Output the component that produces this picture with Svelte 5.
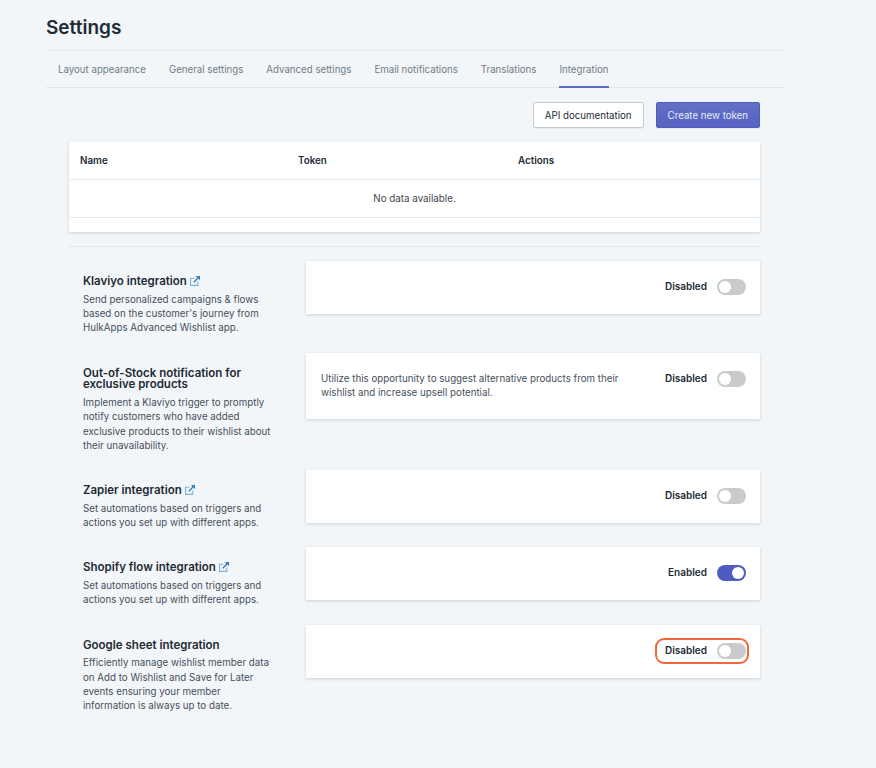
<script>
  const sections = [
    {
      title: "Klaviyo integration",
      link: true,
      desc: "Send personalized campaigns & flows based on the customer's journey from HulkApps Advanced Wishlist app.",
      status: "Disabled",
      on: false,
    },
    {
      title: "Out-of-Stock notification for exclusive products",
      desc: "Implement a Klaviyo trigger to promptly notify customers who have added exclusive products to their wishlist about their unavailability.",
      note: "Utilize this opportunity to suggest alternative products from their wishlist and increase upsell potential.",
      status: "Disabled",
      on: false,
    },
    {
      title: "Zapier integration",
      link: true,
      desc: "Set automations based on triggers and actions you set up with different apps.",
      status: "Disabled",
      on: false,
    },
    {
      title: "Shopify flow integration",
      link: true,
      desc: "Set automations based on triggers and actions you set up with different apps.",
      status: "Enabled",
      on: true,
    },
    {
      title: "Google sheet integration",
      desc: "Efficiently manage wishlist member data on Add to Wishlist and Save for Later events ensuring your member information is always up to date.",
      status: "Disabled",
      on: false,
      marked: true,
    },
  ];

  const tabs = [
    "Layout appearance",
    "General settings",
    "Advanced settings",
    "Email notifications",
    "Translations",
    "Integration",
  ];
</script>

<main class="page">
  <h1>Settings</h1>

  <nav class="tabs">
    {#each tabs as tab}
      <span class="tab" class:active={tab === "Integration"}>{tab}</span>
    {/each}
  </nav>

  <div class="content">
    <div class="actions">
      <button class="btn">API documentation</button>
      <button class="btn primary">Create new token</button>
    </div>

    <div class="table">
      <div class="thead">
        <span class="col-name">Name</span>
        <span class="col-token">Token</span>
        <span>Actions</span>
      </div>
      <div class="empty">No data available.</div>
      <div class="tfoot"></div>
    </div>

    <hr />

    {#each sections as s}
      <section class="row">
        <div class="info">
          <h2>
            {s.title}
            {#if s.link}
              <svg class="ext" viewBox="0 0 10 10" width="10" height="10" aria-hidden="true">
                <path d="M7.8 5.6V9.4H.6V2.2h3.9" fill="none" stroke="#7fb0de" stroke-width="1.1" />
                <path d="M3.8 6.2 8.2 1.8" fill="none" stroke="#2f7fc4" stroke-width="1.4" />
                <path d="M5.8 0h4.2v4.2z" fill="#2f7fc4" />
              </svg>
            {/if}
          </h2>
          <p>{s.desc}</p>
        </div>
        <div class="card">
          <div class="note" class:filled={s.note}>{s.note ?? ""}</div>
          <div class="status" class:marked={s.marked}>
            <span class="label">{s.status}</span>
            <span class="switch" class:on={s.on}><span class="knob"></span></span>
          </div>
        </div>
      </section>
    {/each}
  </div>
</main>

<style>
  :global(body) {
    margin: 0;
    background: #f3f6f8;
    font-family: Inter, "Liberation Sans", sans-serif;
    color: #212b36;
  }

  .page {
    box-sizing: border-box;
    width: 876px;
    height: 768px;
    padding: 14px 92px 0 46px;
    overflow: hidden;
  }

  h1 {
    margin: 0;
    height: 36px;
    font-size: 19px;
    line-height: 27px;
    font-weight: 600;
    color: #212b36;
  }

  .tabs {
    display: flex;
    gap: 23px;
    height: 36px;
    padding-left: 12px;
    border-top: 1px solid #e6e9ec;
    border-bottom: 1px solid #e3e6e9;
  }

  .tab {
    position: relative;
    font-size: 9.7px;
    line-height: 38px;
    color: #6f7c88;
  }

  .tab.active::after {
    content: "";
    position: absolute;
    left: 0;
    right: 0;
    bottom: -1px;
    height: 2px;
    background: #5c6ac4;
  }

  .content {
    padding: 14px 24px 0 23px;
  }

  .actions {
    display: flex;
    justify-content: flex-end;
    gap: 12px;
    height: 26px;
    margin-bottom: 14px;
  }

  .btn {
    height: 26px;
    padding: 0 11px;
    border: 1px solid #c4cdd5;
    border-radius: 2px;
    background: #fff;
    font: 400 9.7px Inter, "Liberation Sans", sans-serif;
    color: #212b36;
    box-shadow: 0 1px 0 rgba(22, 29, 37, 0.05);
  }

  .btn.primary {
    border-color: #4f5db8;
    background: linear-gradient(#6371c7, #5563c1);
    color: #e8eaf8;
  }

  .table {
    background: #fff;
    font-size: 9.8px;
    box-shadow: 0 1px 3px rgba(63, 63, 68, 0.2);
  }

  .thead {
    display: flex;
    height: 37px;
    padding-left: 11px;
    align-items: center;
    font-weight: 600;
    color: #212b36;
    border-bottom: 1px solid #e6e9ec;
  }

  .col-name {
    width: 218px;
  }

  .col-token {
    width: 220px;
  }

  .empty {
    height: 37px;
    line-height: 37px;
    text-align: center;
    color: #3d4852;
    border-bottom: 1px solid #e6e9ec;
  }

  .tfoot {
    height: 14px;
  }

  hr {
    height: 1px;
    margin: 14px 0;
    border: 0;
    background: #e3e6e9;
  }

  .row {
    display: flex;
    align-items: flex-start;
    margin-bottom: 17px;
  }

  .info {
    box-sizing: border-box;
    width: 237px;
    flex: none;
    padding: 15px 33px 0 14px;
  }

  h2 {
    margin: 0 0 5px;
    font-size: 11.5px;
    line-height: 11.7px;
    font-weight: 600;
    color: #212b36;
  }

  .ext {
    vertical-align: -1px;
  }

  .info p {
    margin: 0;
    font-size: 9.75px;
    line-height: 14.3px;
    color: #454f5b;
  }

  .card {
    box-sizing: border-box;
    flex: 1;
    display: flex;
    justify-content: space-between;
    align-items: flex-start;
    gap: 30px;
    min-height: 53px;
    padding: 13px 14px 13px 15px;
    background: #fff;
    box-shadow: 0 1px 3px rgba(63, 63, 68, 0.2);
  }

  .note {
    font-size: 9.75px;
    line-height: 14.3px;
    color: #454f5b;
  }

  .note.filled {
    padding: 6px 0 5.5px;
  }

  .status {
    position: relative;
    display: flex;
    align-items: center;
    flex: none;
    gap: 10px;
    height: 26px;
  }

  .status.marked::after {
    content: "";
    position: absolute;
    inset: 0 -3px 0 -10px;
    border: 2px solid #f4673a;
    border-radius: 9px;
  }

  .label {
    font-size: 10px;
    font-weight: 600;
    color: #212b36;
    position: relative;
    top: -1px;
  }

  .switch {
    position: relative;
    display: block;
    width: 29px;
    height: 16px;
    border-radius: 8px;
    background: #c9cbcd;
  }

  .switch.on {
    background: #4f5bc0;
  }

  .knob {
    position: absolute;
    top: 2px;
    left: 2px;
    width: 12px;
    height: 12px;
    border-radius: 50%;
    background: #fff;
  }

  .switch.on .knob {
    left: 15px;
  }
</style>
